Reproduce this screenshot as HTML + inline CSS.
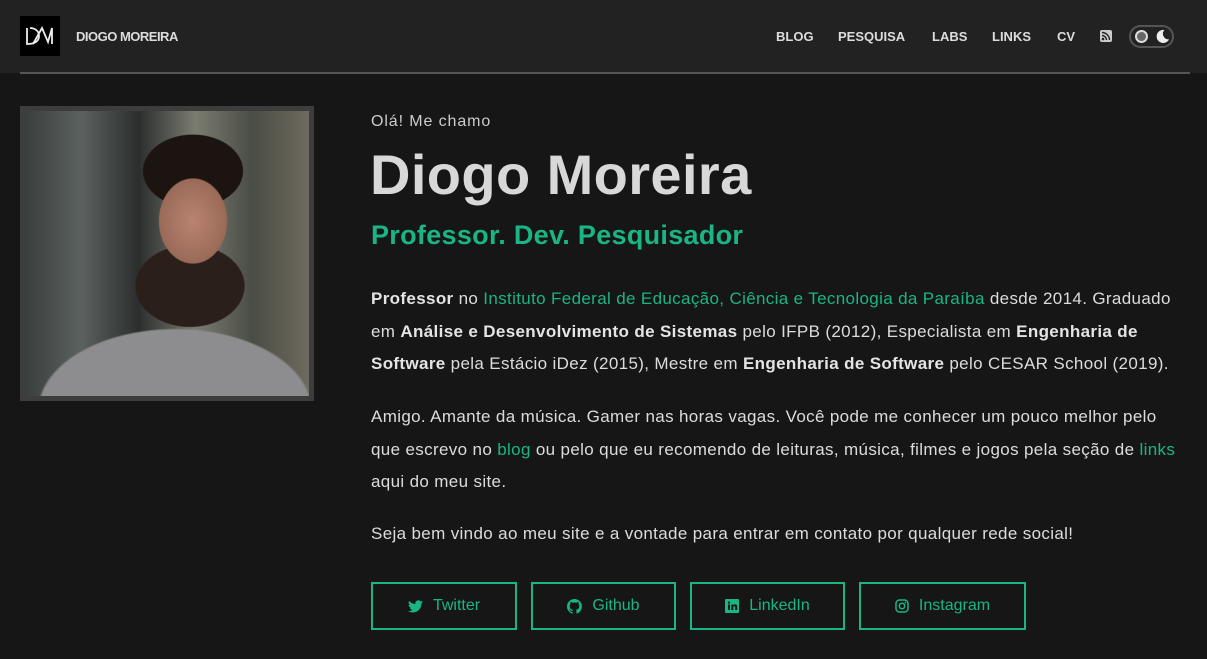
<!DOCTYPE html>
<html><head><meta charset="utf-8"><style>
*{margin:0;padding:0;box-sizing:border-box}
body{width:1207px;height:659px;background:#161616;font-family:"Liberation Sans",sans-serif;color:#dcdcdc;overflow:hidden;position:relative}
header{position:absolute;left:0;top:0;width:1207px;height:73px;background:#222}
.line{position:absolute;left:20px;top:72px;width:1170px;height:2px;background:#555}
.logo{position:absolute;left:20px;top:16px;width:40px;height:40px;background:#000}
.brand{position:absolute;left:76px;top:29px;font-weight:bold;font-size:13px;color:#ddd;letter-spacing:-0.5px}
nav a{position:absolute;top:29px;font-weight:bold;font-size:13px;color:#ddd;text-decoration:none}
.toggle{position:absolute;left:1129px;top:25px;width:45px;height:23px;border:2px solid #555;border-radius:12px}
.toggle .c{position:absolute;left:4px;top:3px;width:13px;height:13px;border-radius:50%;background:#666;border:2px solid #ddd}
.photo{position:absolute;left:20px;top:106px;width:294px;height:295px;background:#3d3d3d;padding:5px}
.img{width:100%;height:100%;background:
radial-gradient(ellipse 48px 60px at 168px 110px,#b98470 0,#9a6a58 70%,transparent 72%),
radial-gradient(ellipse 60px 45px at 165px 175px,#2a1f1a 0,#2a1f1a 90%,transparent 92%),
radial-gradient(ellipse 55px 40px at 168px 60px,#1c1410 0,#1c1410 90%,transparent 92%),
radial-gradient(ellipse 150px 90px at 150px 300px,#8d8d8f 0,#8d8d8f 90%,transparent 92%),
linear-gradient(90deg,#3a3f3e 0,#5b615f 20%,#2b2e2d 40%,#7a7c70 60%,#4a4d45 80%,#6d6a5e 100%)}
.hello{position:absolute;left:371px;top:113px;font-size:16px;color:#ccc;letter-spacing:0.9px}
h1{position:absolute;left:370px;top:142px;font-size:56px;font-weight:bold;color:#d8d8d8;letter-spacing:0.4px}
h2{position:absolute;left:371px;top:220px;font-size:27px;font-weight:bold;color:#1ab585;letter-spacing:0.3px}
p{position:absolute;left:371px;width:820px;font-size:17px;line-height:32.5px;color:#dcdcdc;letter-spacing:0.35px}
p b{color:#e4e4e4}
.g{color:#1ab585}
.btn{position:absolute;top:582px;height:48px;border:2px solid #1ab585;color:#1ab585;font-size:16px;display:flex;align-items:center;justify-content:center;gap:10px}
</style></head><body>
<header>
<div class="logo"><svg width="40" height="40" viewBox="0 0 40 40"><path d="M7 12v16c8 0 12-3 12-8s-4-8-9-8M13 28l9-16 6 14 4-14v16" stroke="#eee" stroke-width="1.8" fill="none"/></svg></div>
<div class="brand">DIOGO MOREIRA</div>
<nav>
<a style="left:776px">BLOG</a><a style="left:838px">PESQUISA</a><a style="left:932px">LABS</a><a style="left:992px">LINKS</a><a style="left:1057px">CV</a>
</nav>
<svg style="position:absolute;left:1100px;top:30px" width="12" height="12" viewBox="0 0 12 12"><rect width="12" height="12" rx="2" fill="#ccc"/><circle cx="3" cy="9" r="1.3" fill="#222"/><path d="M2 5.5a4.5 4.5 0 0 1 4.5 4.5M2 2.5a7.5 7.5 0 0 1 7.5 7.5" stroke="#222" stroke-width="1.4" fill="none"/></svg>
<div class="toggle"><div class="c"></div><svg style="position:absolute;left:24px;top:2px" width="15" height="15" viewBox="0 0 16 16"><path d="M10 1a7 7 0 1 0 5 10A6 6 0 0 1 10 1z" fill="#eee"/></svg></div>
<div class="line"></div>
</header>
<div class="photo"><div class="img"></div></div>
<div class="hello">Olá! Me chamo</div>
<h1>Diogo Moreira</h1>
<h2>Professor. Dev. Pesquisador</h2>
<p style="top:283px"><b>Professor</b> no <span class="g">Instituto Federal de Educação, Ciência e Tecnologia da Paraíba</span> desde 2014. Graduado em <b>Análise e Desenvolvimento de Sistemas</b> pelo IFPB (2012), Especialista em <b>Engenharia de Software</b> pela Estácio iDez (2015), Mestre em <b>Engenharia de Software</b> pelo CESAR School (2019).</p>
<p style="top:401px">Amigo. Amante da música. Gamer nas horas vagas. Você pode me conhecer um pouco melhor pelo que escrevo no <span class="g">blog</span> ou pelo que eu recomendo de leituras, música, filmes e jogos pela seção de <span class="g">links</span> aqui do meu site.</p>
<p style="top:518px">Seja bem vindo ao meu site e a vontade para entrar em contato por qualquer rede social!</p>
<div class="btn" style="left:371px;width:146px"><svg width="15" height="13" viewBox="0 0 24 20"><path d="M24 2.4a10 10 0 0 1-2.8.8A5 5 0 0 0 23.3.5a10 10 0 0 1-3.1 1.2A4.9 4.9 0 0 0 11.8 6 14 14 0 0 1 1.7.9a4.9 4.9 0 0 0 1.5 6.6A4.9 4.9 0 0 1 1 6.9a4.9 4.9 0 0 0 3.9 4.8 5 5 0 0 1-2.2.1 4.9 4.9 0 0 0 4.6 3.4A9.9 9.9 0 0 1 0 17.3 14 14 0 0 0 7.5 19.5c9 0 14-7.5 14-14v-.6A10 10 0 0 0 24 2.4z" fill="#1ab585"/></svg>Twitter</div>
<div class="btn" style="left:531px;width:145px"><svg width="15" height="15" viewBox="0 0 16 16"><path fill="#1ab585" d="M8 0a8 8 0 0 0-2.5 15.6c.4 0 .5-.2.5-.4v-1.5c-2.2.5-2.7-1-2.7-1-.4-.9-.9-1.200-.9-1.2-.7-.5.1-.5.1-.5.8.1 1.2.8 1.2.8.7 1.3 1.9.9 2.3.7.1-.5.3-.9.5-1.1-1.8-.2-3.6-.9-3.6-4 0-.9.3-1.6.8-2.100-.1-.2-.4-1 .1-2.100 0 0 .7-.2 2.2.8a7.5 7.5 0 0 1 4 0c1.5-1 2.2-.8 2.2-.8.4 1.100.2 1.900.1 2.100.5.6.8 1.300.8 2.100 0 3.100-1.900 3.800-3.600 4 .3.3.6.8.6 1.500v2.200c0 .2.1.5.6.4A8 8 0 0 0 8 0z"/></svg>Github</div>
<div class="btn" style="left:690px;width:155px"><svg width="14" height="14" viewBox="0 0 14 14"><rect width="14" height="14" rx="1" fill="#1ab585"/><path d="M3 5.5h2V11H3zM4 2.5a1.1 1.1 0 1 1 0 2.2 1.1 1.1 0 0 1 0-2.2zM6.3 5.5h1.9v.8c.3-.5.9-.9 1.8-.9 1.9 0 2.2 1.2 2.2 2.8V11h-2V8.5c0-.6 0-1.4-.9-1.4s-1 .7-1 1.4V11H6.3z" fill="#161616"/></svg>LinkedIn</div>
<div class="btn" style="left:859px;width:167px"><svg width="14" height="14" viewBox="0 0 14 14"><rect x="1" y="1" width="12" height="12" rx="3.5" fill="none" stroke="#1ab585" stroke-width="1.5"/><circle cx="7" cy="7" r="2.7" fill="none" stroke="#1ab585" stroke-width="1.5"/><circle cx="10.4" cy="3.6" r=".8" fill="#1ab585"/></svg>Instagram</div>
</body></html>
